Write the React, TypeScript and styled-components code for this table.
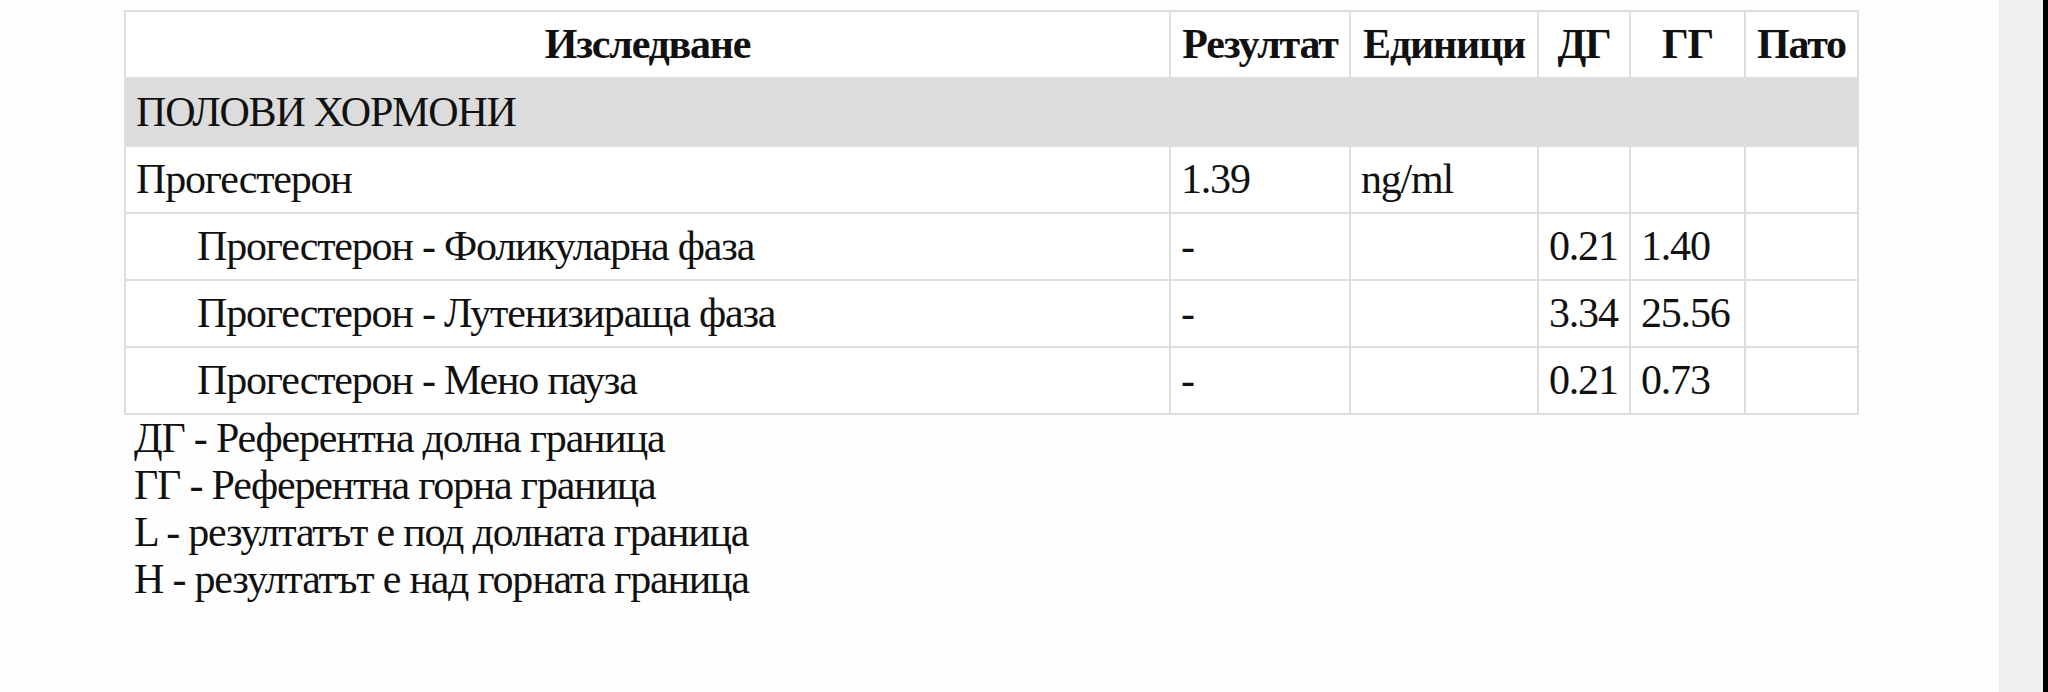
import styled, { createGlobalStyle } from 'styled-components';

const Global = createGlobalStyle`
  html, body {
    margin: 0;
    padding: 0;
    background: #ffffff;
  }
  body {
    font-family: "Liberation Serif", "Times New Roman", serif;
    color: #111;
  }
`;

const Screen = styled.div`
  display: flex;
  width: 2048px;
  height: 692px;
  overflow: hidden;
`;

const Page = styled.div`
  flex: 1;
  padding: 10px 0 0 124px;
  background: #fefefe;
`;

const Scroll = styled.div`
  width: 44px;
  background: #eff0f2;
`;

const Edge = styled.div`
  width: 5px;
  background: #000;
`;

const Table = styled.table`
  width: 1733px;
  border-collapse: collapse;
  table-layout: fixed;
  font-size: 42px;
  letter-spacing: -1.2px;
  line-height: 1.1;
`;

const Th = styled.th`
  height: 65px;
  padding: 0 8px;
  border: 2px solid #dedede;
  font-weight: 700;
  text-align: center;
  white-space: nowrap;
  background: #fff;
`;

const Td = styled.td<{ $indent?: boolean }>`
  height: 65px;
  padding: 0 10px 0 ${(p) => (p.$indent ? '71px' : '10px')};
  border: 2px solid #dedede;
  white-space: nowrap;
  vertical-align: middle;
  background: #fff;
`;

const SectionCell = styled.td`
  height: 66px;
  padding: 0 10px;
  border: 2px solid #dedede;
  background: #dcdcdc;
`;

const Legend = styled.div`
  padding-left: 10px;
  font-size: 42px;
  letter-spacing: -1.2px;
  line-height: 47px;
`;

type Row = { name: string; result: string; unit: string; lo: string; hi: string; indent?: boolean };

const rows: Row[] = [
  { name: 'Прогестерон', result: '1.39', unit: 'ng/ml', lo: '', hi: '' },
  { name: 'Прогестерон - Фоликуларна фаза', result: '-', unit: '', lo: '0.21', hi: '1.40', indent: true },
  { name: 'Прогестерон - Лутенизираща фаза', result: '-', unit: '', lo: '3.34', hi: '25.56', indent: true },
  { name: 'Прогестерон - Мено пауза', result: '-', unit: '', lo: '0.21', hi: '0.73', indent: true },
];

const legend = [
  'ДГ - Референтна долна граница',
  'ГГ - Референтна горна граница',
  'L - резултатът е под долната граница',
  'H - резултатът е над горната граница',
];

export default function App() {
  return (
    <>
      <Global />
      <Screen>
        <Page>
          <Table>
            <colgroup>
              <col style={{ width: 1045 }} />
              <col style={{ width: 180 }} />
              <col style={{ width: 188 }} />
              <col style={{ width: 92 }} />
              <col style={{ width: 115 }} />
              <col style={{ width: 113 }} />
            </colgroup>
            <thead>
              <tr>
                <Th>Изследване</Th>
                <Th>Резултат</Th>
                <Th>Единици</Th>
                <Th>ДГ</Th>
                <Th>ГГ</Th>
                <Th>Пато</Th>
              </tr>
            </thead>
            <tbody>
              <tr>
                <SectionCell colSpan={6}>ПОЛОВИ ХОРМОНИ</SectionCell>
              </tr>
              {rows.map((r) => (
                <tr key={r.name}>
                  <Td $indent={r.indent}>{r.name}</Td>
                  <Td>{r.result}</Td>
                  <Td>{r.unit}</Td>
                  <Td>{r.lo}</Td>
                  <Td>{r.hi}</Td>
                  <Td></Td>
                </tr>
              ))}
            </tbody>
          </Table>
          <Legend>
            {legend.map((l) => (
              <div key={l}>{l}</div>
            ))}
          </Legend>
        </Page>
        <Scroll />
        <Edge />
      </Screen>
    </>
  );
}
